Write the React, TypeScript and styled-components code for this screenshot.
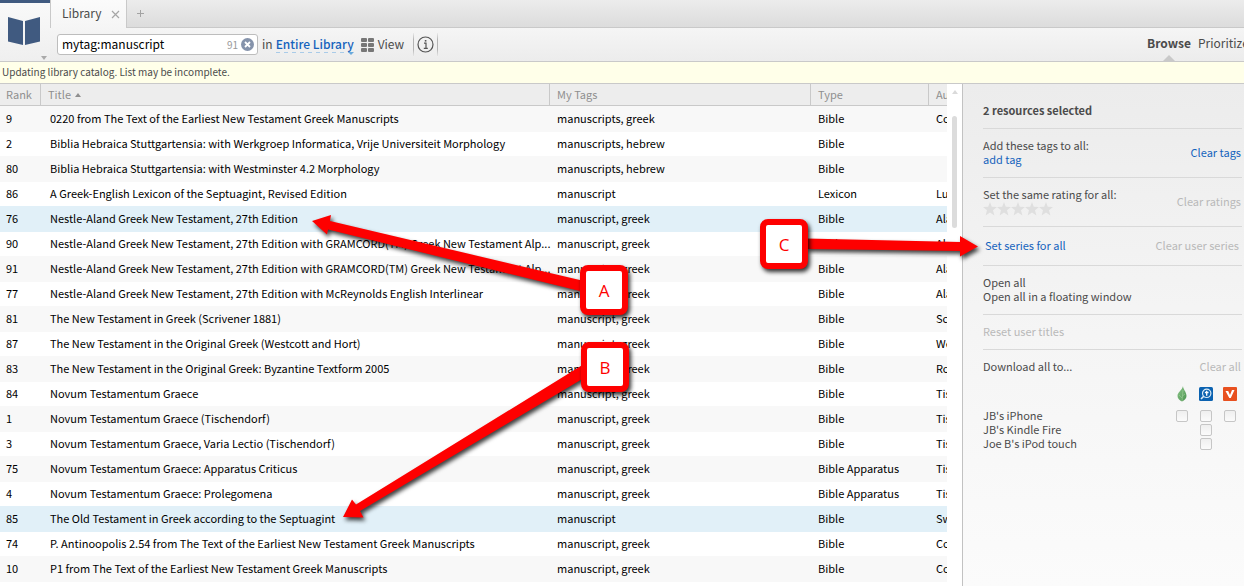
import React from "react";
import styled, { createGlobalStyle } from "styled-components";

const Global = createGlobalStyle`
  *, *::before, *::after { box-sizing: border-box; }
  body {
    margin: 0;
    overflow-x: hidden;
    background: #fff;
    color: #4b4b4b;
    font: 11px/14px "Noto Sans CJK KR", "Noto Sans", sans-serif;
  }
  button, input { font: inherit; color: inherit; margin: 0; }
`;

const Page = styled.div`
  position: relative;
  display: flex;
  flex-direction: column;
  min-height: 100vh;
`;

const TopBar = styled.header`
  display: grid;
  grid-template-columns: 50px minmax(0, 1fr);
  grid-template-rows: 28px 33px;
  border-bottom: 1px solid #c9c9c9;
`;

const HomeButton = styled.button`
  grid-row: 1 / span 2;
  display: flex;
  flex-direction: column;
  align-items: flex-end;
  justify-content: space-between;
  padding: 14px 3px 1px 8px;
  border: 0;
  border-top: 3px solid #405a80;
  background: linear-gradient(#f9f9f9, #efefef);
`;

const Tabs = styled.div`
  display: flex;
  border-bottom: 1px solid #c9c9c9;
  background: linear-gradient(#ececec, #dcdcdc);
`;

const Tab = styled.div`
  display: flex;
  align-items: center;
  justify-content: space-between;
  width: 77px;
  height: 28px;
  padding: 0 6px 0 11px;
  border: solid #c9c9c9;
  border-width: 0 1px;
  background: linear-gradient(#fbfbfb, #f5f5f5);
  font-size: 12px;
`;

const IconButton = styled.button`
  display: flex;
  padding: 0;
  border: 0;
  background: none;
`;

const AddTab = styled(IconButton)`
  align-self: center;
  margin-left: 10px;
`;

const Toolbar = styled.div`
  display: flex;
  align-items: center;
  min-width: 0;
  padding-left: 7px;
  background: linear-gradient(#f5f5f5, #ececec);
  font-size: 12px;
  line-height: 18px;
`;

const SearchBox = styled.label`
  display: flex;
  align-items: center;
  gap: 3px;
  width: 201px;
  height: 21px;
  padding: 0 3px 0 4px;
  border: 1px solid #bdbdbd;
  border-radius: 3px;
  background: #fff;
`;

const SearchInput = styled.input`
  flex: 1;
  min-width: 0;
  height: 19px;
  padding: 0 0 2px;
  border: 0;
  outline: 0;
  background: none;
  color: #000;
`;

const Count = styled.span`
  color: #999;
  font-size: 10px;
`;

const Scope = styled.span`
  display: flex;
  gap: 3px;
  margin-left: 4px;
  padding-bottom: 2px;
`;

const ScopeButton = styled.button`
  position: relative;
  padding: 0;
  border: 0;
  background: repeating-linear-gradient(90deg, #a9cbe8 0 4px, transparent 4px 8px) left bottom / 100% 1px no-repeat;
  color: #1563bd;
  font-weight: 500;
  line-height: 18px;

  &::after {
    content: "";
    position: absolute;
    right: 0;
    bottom: -2px;
    border: solid transparent;
    border-width: 3px 3px 0;
    border-top-color: #6aa9dc;
  }
`;

const ViewButton = styled(IconButton)`
  align-items: center;
  gap: 4px;
  margin-left: 7px;
`;

const ButtonText = styled.span`
  padding-bottom: 2px;
`;

const InfoButton = styled(IconButton)`
  margin-left: 9px;
  padding: 3px;
  border: 1px solid;
  border-width: 0 1px;
  border-image: linear-gradient(transparent, #b5b5b5 30%, #b5b5b5 70%, transparent) 1;
`;

const Modes = styled.nav`
  display: flex;
  align-self: stretch;
  gap: 7px;
  margin-left: auto;
`;

const Mode = styled.button<{ $active?: boolean }>`
  position: relative;
  flex: none;
  width: ${(p) => (p.$active ? "44px" : "46px")};
  overflow: hidden;
  padding: 0 0 4px;
  border: 0;
  background: none;
  font-weight: ${(p) => (p.$active ? 700 : 400)};
  text-align: left;
  white-space: nowrap;

  &::after {
    content: ${(p) => (p.$active ? '""' : "none")};
    position: absolute;
    left: 16px;
    bottom: 0;
    border: solid transparent;
    border-width: 0 6px 6px;
    border-bottom-color: #c9c9c9;
  }
`;

const Notice = styled.p`
  height: 22px;
  margin: 0;
  padding: 3px 2px;
  border-bottom: 1px solid #c9c9c9;
  background: #ffffe9;
  font-size: 10px;
`;

const Body = styled.main`
  display: flex;
  flex: 1;
`;

const ListArea = styled.section`
  display: flex;
  flex: 1;
  min-width: 0;
  border-right: 1px solid #c2c2c2;
`;

const TableWrap = styled.div`
  flex: 1;
  min-width: 0;
`;

const Table = styled.table`
  width: 100%;
  table-layout: fixed;
  border-collapse: separate;
  border-spacing: 0;
  color: #000;
`;

const Head = styled.th<{ $width?: number }>`
  width: ${(p) => (p.$width ? `${p.$width}px` : "auto")};
  height: 22px;
  padding: 0 7px 2px;
  overflow: hidden;
  border: solid #c9c9c9;
  border-width: 0 1px 1px 0;
  background: #ededed;
  color: #8f8f8f;
  font-weight: 400;
  text-align: left;
  white-space: nowrap;

  &:first-child { padding: 0 6px 2px; }
  &:last-child { padding-right: 0; border-right: 0; }
`;

const SortArrow = styled.span`
  display: inline-block;
  margin-left: 4px;
  border: solid transparent;
  border-width: 0 3px 4px;
  border-bottom-color: #8f8f8f;
  vertical-align: 2px;
`;

const Row = styled.tr<{ $selected: boolean }>`
  height: 24px;
  background: ${(p) => (p.$selected ? "#e1f0f8" : "#fff")};

  &:nth-child(odd) {
    height: 26px;
    background: ${(p) => (p.$selected ? "#e1f0f8" : "#f8f8f8")};
  }
`;

const Cell = styled.td`
  padding: 0 0 2px 7px;
  overflow: hidden;
  white-space: nowrap;

  &:first-child { padding-left: 6px; }
  &:nth-child(2) { padding-left: 9px; overflow: visible; }
`;

const ScrollBar = styled.div`
  display: flex;
  flex-direction: column;
  align-items: center;
  gap: 22px;
  width: 15px;
  padding-top: 6px;
`;

const ScrollUp = styled.div`
  border: solid transparent;
  border-width: 0 3px 4px;
  border-bottom-color: #dadada;
`;

const ScrollThumb = styled.div`
  width: 5px;
  height: 112px;
  border-radius: 3px;
  background: #dcdcdc;
`;

const Panel = styled.aside`
  width: 281px;
  padding: 10px 2px 0 20px;
  background: linear-gradient(#ececec, #f5f5f5 50%, #fbfbfb);
`;

const Section = styled.section<{ $tall?: boolean }>`
  display: flex;
  align-items: center;
  justify-content: space-between;
  padding: ${(p) => (p.$tall ? "11px 2px 13px" : "9px 0 11px")};
  border-bottom: 1px solid #d9d9d9;
`;

const PanelTitle = styled.h2`
  margin: 0;
  font-size: 11px;
  line-height: 14px;
`;

const Lines = styled.div`
  display: flex;
  flex-direction: column;
  align-items: flex-start;
`;

const Action = styled.button<{ $tone?: "link" }>`
  padding: 0 1px 0 0;
  border: 0;
  background: none;
  color: ${(p) => (p.$tone === "link" ? "#1563bd" : "#4b4b4b")};
  line-height: 14px;
  white-space: nowrap;

  &:disabled { color: #b9b9b9; }
`;

const Stars = styled.div`
  display: flex;
  height: 14px;
  padding-top: 1px;
`;

const Download = styled.section`
  padding-top: 9px;
`;

const DownloadHead = styled.div`
  display: flex;
  justify-content: space-between;
  align-items: baseline;
`;

const Devices = styled.table`
  width: 100%;
  table-layout: fixed;
  border-spacing: 0;

  th { padding: 0 0 2px; font-weight: 400; line-height: 12px; text-align: left; }
  td { padding: 0; width: 24px; height: 14px; }
  thead th { width: 24px; height: 36px; padding: 6px 0 0; }
  thead th:first-child { width: auto; }
  thead svg { display: block; margin: 0 auto; }
`;

const Check = styled.input`
  appearance: none;
  display: block;
  width: 12px;
  height: 12px;
  margin: 0 auto;
  border: 1px solid #c6c6c6;
  border-radius: 2px;
  background: linear-gradient(#efefef, #fbfbfb);
`;

const Annotations = styled.div`
  position: absolute;
  inset: 0;
  overflow: hidden;
  pointer-events: none;
`;

const Arrows = styled.svg`
  position: absolute;
  top: 0;
  left: 0;
  filter: drop-shadow(2px 3px 2px rgba(0, 0, 0, 0.75));
`;

const Callout = styled.div<{ $x: number; $y: number }>`
  position: absolute;
  left: ${(p) => p.$x}px;
  top: ${(p) => p.$y}px;
  width: 48px;
  height: 50px;
  border: 6px solid #fe0000;
  border-radius: 8px;
  background: #fff;
  box-shadow: 2px 3px 4px rgba(0, 0, 0, 0.8);
  color: #fe0000;
  font: 17px/40px "Open Sans", sans-serif;
  text-align: center;
`;

type Resource = [rank: number, title: string, tags: string, type: string, author: string];

const resources: Resource[] = [
  [9, "0220 from The Text of the Earliest New Testament Greek Manuscripts", "manuscripts, greek", "Bible", "Co"],
  [2, "Biblia Hebraica Stuttgartensia: with Werkgroep Informatica, Vrije Universiteit Morphology", "manuscripts, hebrew", "Bible", ""],
  [80, "Biblia Hebraica Stuttgartensia: with Westminster 4.2 Morphology", "manuscripts, hebrew", "Bible", ""],
  [86, "A Greek-English Lexicon of the Septuagint, Revised Edition", "manuscript", "Lexicon", "Lu"],
  [76, "Nestle-Aland Greek New Testament, 27th Edition", "manuscript, greek", "Bible", "Ala"],
  [90, "Nestle-Aland Greek New Testament, 27th Edition with GRAMCORD(TM) Greek New Testament Alp...", "manuscript, greek", "Bible", "Ala"],
  [91, "Nestle-Aland Greek New Testament, 27th Edition with GRAMCORD(TM) Greek New Testament Alp...", "manuscript, greek", "Bible", "Ala"],
  [77, "Nestle-Aland Greek New Testament, 27th Edition with McReynolds English Interlinear", "manuscript, greek", "Bible", "Ala"],
  [81, "The New Testament in Greek (Scrivener 1881)", "manuscript, greek", "Bible", "Sc"],
  [87, "The New Testament in the Original Greek (Westcott and Hort)", "manuscript, greek", "Bible", "We"],
  [83, "The New Testament in the Original Greek: Byzantine Textform 2005", "manuscript, greek", "Bible", "Ro"],
  [84, "Novum Testamentum Graece", "manuscript, greek", "Bible", "Tis"],
  [1, "Novum Testamentum Graece (Tischendorf)", "manuscript, greek", "Bible", "Tis"],
  [3, "Novum Testamentum Graece, Varia Lectio (Tischendorf)", "manuscript, greek", "Bible", "Tis"],
  [75, "Novum Testamentum Graece: Apparatus Criticus", "manuscript, greek", "Bible Apparatus", "Tis"],
  [4, "Novum Testamentum Graece: Prolegomena", "manuscript, greek", "Bible Apparatus", "Tis"],
  [85, "The Old Testament in Greek according to the Septuagint", "manuscript", "Bible", "Sw"],
  [74, "P. Antinoopolis 2.54 from The Text of the Earliest New Testament Greek Manuscripts", "manuscript, greek", "Bible", "Co"],
  [10, "P1 from The Text of the Earliest New Testament Greek Manuscripts", "manuscript, greek", "Bible", "Co"],
];

const selectedRanks = [76, 85];

const devices = [
  { name: "JB's iPhone", apps: [true, true, true] },
  { name: "JB's Kindle Fire", apps: [false, true, false] },
  { name: "Joe B's iPod touch", apps: [false, true, false] },
];
const appNames = ["Proclaim", "Bible", "Vyrso"];

const BookLogo = () => (
  <svg width="32" height="28" viewBox="0 0 32 28" style={{ alignSelf: "flex-start" }}>
    <path d="M0 0 15 4V28L0 24.500ZM32 0 17 4V28L32 24.500Z" fill="#405a80" />
  </svg>
);

const Star = () => (
  <svg width="14" height="14" viewBox="0 0 14 14">
    <path d="M7 0 8.800 4.800 14 5 10 8.200 11.400 13.500 7 10.500 2.600 13.500 4 8.200 0 5 5.200 4.800Z" fill="#dfdfdf" />
  </svg>
);

const LeafIcon = () => (
  <svg width="14" height="16" viewBox="0 0 14 16">
    <defs>
      <linearGradient id="leaf" x1="0" y1="0" x2="1" y2="1">
        <stop stopColor="#8cc68a" />
        <stop offset="1" stopColor="#4c9350" />
      </linearGradient>
    </defs>
    <path d="M8 0C8 3 11.500 6 11.500 10c0 2.500-2 4.500-4.500 5.500C4.500 14.500 2.500 12.500 2.500 10 2.500 6 7 4.500 8 0Z" fill="url(#leaf)" />
    <path d="M8 4 7 15M7 12 4 9M7.500 10 10 8" stroke="#9fd09b" strokeWidth=".6" fill="none" />
  </svg>
);

const BibleIcon = () => (
  <svg width="14" height="14" viewBox="0 0 14 14">
    <rect width="14" height="14" rx="1.500" fill="#0b62b0" />
    <circle cx="7.700" cy="6.300" r="4.200" fill="none" stroke="#dcecf8" strokeWidth="1.200" />
    <path d="M4.700 9.300 2 12" stroke="#dcecf8" strokeWidth="1.600" />
    <path d="M7.700 3.800V8.800M5.900 5.500H9.500" stroke="#fff" strokeWidth="1.300" />
  </svg>
);

const VyrsoIcon = () => (
  <svg width="14" height="14" viewBox="0 0 14 14">
    <rect width="14" height="14" rx="1" fill="#e8501f" />
    <path d="M2.500 4H5.200L7 8 9 3H11.500L7.800 11H6.300Z" fill="#fff" />
  </svg>
);

export default function App() {
  return (
    <>
      <Global />
      <Page>
        <TopBar>
          <HomeButton aria-label="Home">
            <BookLogo />
            <svg width="6" height="4" viewBox="0 0 6 4"><path d="M0 0H6L3 4Z" fill="#aaa" /></svg>
          </HomeButton>
          <Tabs>
            <Tab>
              <ButtonText>Library</ButtonText>
              <IconButton aria-label="Close tab">
                <svg width="9" height="9" viewBox="0 0 9 9"><path d="M1 1 8 8M8 1 1 8" stroke="#a6a6a6" strokeWidth="1.200" /></svg>
              </IconButton>
            </Tab>
            <AddTab aria-label="New tab">
              <svg width="7" height="7" viewBox="0 0 7 7"><path d="M3.500 0V7M0 3.500H7" stroke="#a3a3a3" /></svg>
            </AddTab>
          </Tabs>
          <Toolbar>
            <SearchBox>
              <SearchInput type="text" aria-label="Find in library" defaultValue="mytag:manuscript" />
              <Count>91</Count>
              <IconButton aria-label="Clear search">
                <svg width="13" height="13" viewBox="0 0 13 13">
                  <circle cx="6.500" cy="6.500" r="6.500" fill="#8593ab" />
                  <path d="M4 4 9 9M9 4 4 9" stroke="#fff" strokeWidth="1.800" />
                </svg>
              </IconButton>
            </SearchBox>
            <Scope>
              in <ScopeButton>Entire Library</ScopeButton>
            </Scope>
            <ViewButton>
              <svg width="13" height="14" viewBox="0 0 13 14" fill="#777">
                {[0, 5, 10].map((y) => (
                  <g key={y}>
                    <rect y={y} width="6" height="4" rx="1" />
                    <rect x="7" y={y} width="6" height="4" rx="1" />
                  </g>
                ))}
              </svg>
              <ButtonText>View</ButtonText>
            </ViewButton>
            <InfoButton aria-label="Information">
              <svg width="17" height="17" viewBox="0 0 17 17">
                <circle cx="8.500" cy="8.500" r="7.500" fill="none" stroke="#555" strokeWidth="1.200" />
                <path d="M7 7.200H9V12.300M6.800 12.300H10.800" stroke="#555" strokeWidth="1.200" fill="none" />
                <rect x="7.800" y="4" width="1.600" height="1.600" fill="#555" />
              </svg>
            </InfoButton>
            <Modes>
              <Mode $active>Browse</Mode>
              <Mode>Prioritize</Mode>
            </Modes>
          </Toolbar>
        </TopBar>
        <Notice>Updating library catalog. List may be incomplete.</Notice>
        <Body>
          <ListArea>
            <TableWrap>
              <Table>
                <thead>
                  <tr>
                    <Head $width={41}>Rank</Head>
                    <Head $width={509}>Title<SortArrow /></Head>
                    <Head $width={261}>My Tags</Head>
                    <Head $width={118}>Type</Head>
                    <Head>Au</Head>
                  </tr>
                </thead>
                <tbody>
                  {resources.map(([rank, title, tags, type, author]) => (
                    <Row key={rank} $selected={selectedRanks.includes(rank)}>
                      <Cell>{rank}</Cell>
                      <Cell>{title}</Cell>
                      <Cell>{tags}</Cell>
                      <Cell>{type}</Cell>
                      <Cell>{author}</Cell>
                    </Row>
                  ))}
                </tbody>
              </Table>
            </TableWrap>
            <ScrollBar>
              <ScrollUp />
              <ScrollThumb />
            </ScrollBar>
          </ListArea>
          <Panel>
            <Section><PanelTitle>2 resources selected</PanelTitle></Section>
            <Section>
              <Lines>
                Add these tags to all:
                <Action $tone="link">add tag</Action>
              </Lines>
              <Action $tone="link">Clear tags</Action>
            </Section>
            <Section>
              <Lines>
                Set the same rating for all:
                <Stars>{[1, 2, 3, 4, 5].map((n) => <Star key={n} />)}</Stars>
              </Lines>
              <Action disabled>Clear ratings</Action>
            </Section>
            <Section $tall>
              <Action $tone="link">Set series for all</Action>
              <Action disabled>Clear user series</Action>
            </Section>
            <Section>
              <Lines>
                <Action>Open all</Action>
                <Action>Open all in a floating window</Action>
              </Lines>
            </Section>
            <Section><Action disabled>Reset user titles</Action></Section>
            <Download>
              <DownloadHead>
                Download all to...
                <Action disabled>Clear all</Action>
              </DownloadHead>
              <Devices>
                <thead>
                  <tr>
                    <th aria-label="Device" />
                    <th aria-label={appNames[0]}><LeafIcon /></th>
                    <th aria-label={appNames[1]}><BibleIcon /></th>
                    <th aria-label={appNames[2]}><VyrsoIcon /></th>
                  </tr>
                </thead>
                <tbody>
                  {devices.map((d) => (
                    <tr key={d.name}>
                      <th scope="row">{d.name}</th>
                      {d.apps.map((available, i) => (
                        <td key={appNames[i]}>
                          {available && <Check type="checkbox" aria-label={`${appNames[i]} on ${d.name}`} />}
                        </td>
                      ))}
                    </tr>
                  ))}
                </tbody>
              </Devices>
            </Download>
          </Panel>
        </Body>
        <Annotations>
          <Arrows width="1000" height="560" viewBox="0 0 1000 560" fill="#fe0000">
            <path d="M312 221 331 215 330 221 584 281V292L328 229.500 327 234.500Z" />
            <path d="M343 517 352 499.500 356 504.500 584 364V378L360 511 363.500 517.500Z" />
            <path d="M806 238.500 960 242 960 236 978 246.500 960 256.500 960 251 806 249Z" />
          </Arrows>
          <Callout $x={580} $y={265}>A</Callout>
          <Callout $x={581} $y={342}>B</Callout>
          <Callout $x={760} $y={219}>C</Callout>
        </Annotations>
      </Page>
    </>
  );
}
